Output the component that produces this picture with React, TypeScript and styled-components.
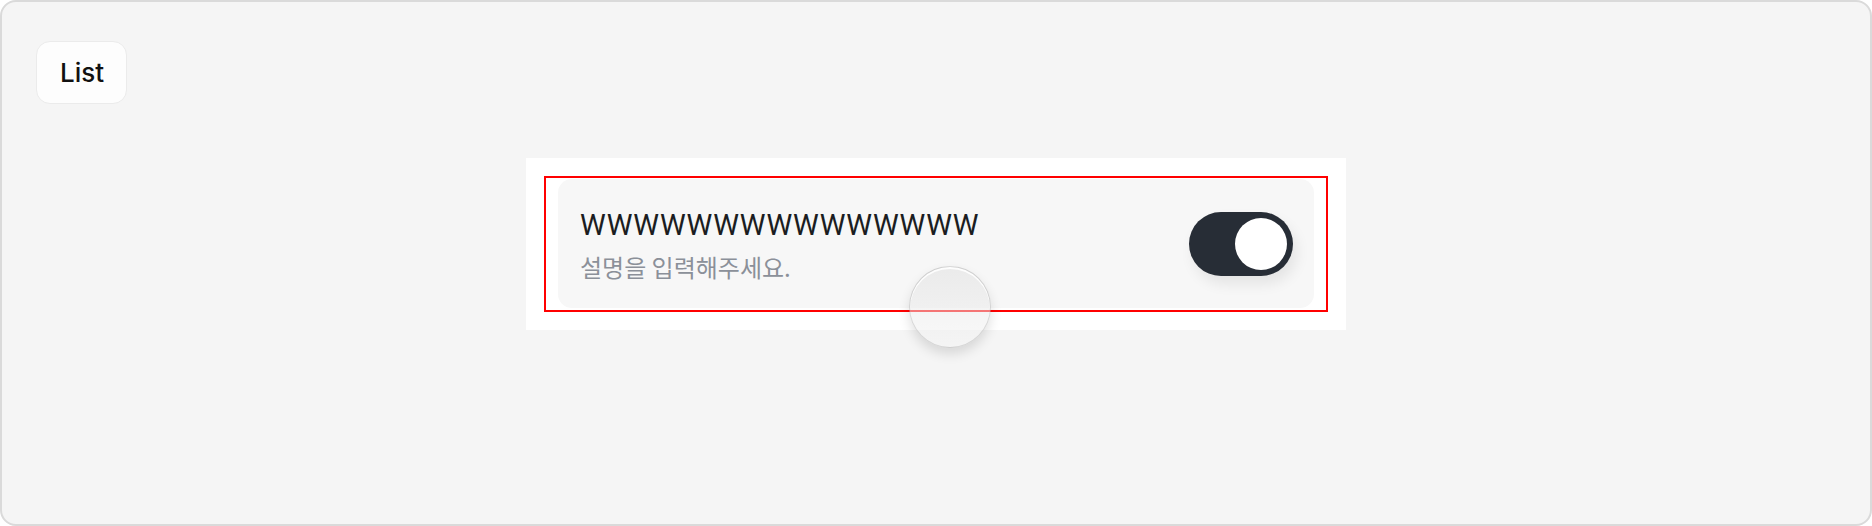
import React, { FC } from 'react';
import styled, { createGlobalStyle } from 'styled-components';

const GlobalStyle = createGlobalStyle`
	html, body {
		margin: 0;
		padding: 0;
		background: #ffffff;
	}
	body {
		font-family: Inter, 'Noto Sans CJK KR', sans-serif;
	}
	* {
		box-sizing: border-box;
	}
`;

type ToggleProps = {
	checked: boolean;
};

const Toggle: FC<ToggleProps> = ({ checked }) => (
	<Track $checked={checked} role="switch" aria-checked={checked}>
		<Knob />
	</Track>
);

type ListItemProps = {
	title: string;
	description: string;
	checked: boolean;
};

const ListItem: FC<ListItemProps> = ({ title, description, checked }) => (
	<Card>
		<TextBlock>
			<Title>{title}</Title>
			<Description>{description}</Description>
		</TextBlock>
		<Toggle checked={checked} />
	</Card>
);

const App: FC = () => (
	<>
		<GlobalStyle />
		<Frame>
			<Header>
				<TabButton>List</TabButton>
			</Header>
			<Stage>
				<Panel>
					<Highlight>
						<ListItem title="WWWWWWWWWWWWWWW" description="설명을 입력해주세요." checked />
					</Highlight>
					<TouchPoint />
				</Panel>
			</Stage>
		</Frame>
	</>
);

const Frame = styled.div`
	width: 1872px;
	height: 526px;
	background: #f5f5f5;
	border: 2px solid #dadada;
	border-radius: 16px;
	padding: 39px 34px 0;
	display: flex;
	flex-direction: column;
	overflow: hidden;
`;

const Header = styled.div`
	display: flex;
`;

const TabButton = styled.button`
	width: 91px;
	height: 63px;
	background: #fdfdfd;
	border: 1px solid #ebebeb;
	border-radius: 14px;
	font-family: Inter, 'Noto Sans CJK KR', sans-serif;
	font-size: 26px;
	font-weight: 500;
	color: #111111;
	padding: 0 0 0 1px;
	cursor: pointer;
`;

const Stage = styled.div`
	display: flex;
	justify-content: center;
	margin-top: 54px;
`;

const Panel = styled.div`
	position: relative;
	width: 820px;
	height: 172px;
	background: #ffffff;
	padding: 18px;
`;

const Highlight = styled.div`
	border: 2px solid #ff0000;
	padding: 1px 12px 2px;
`;

const Card = styled.div`
	height: 129px;
	background: #f7f7f7;
	border-radius: 14px;
	padding: 0 21px 0 22px;
	display: flex;
	align-items: center;
	justify-content: space-between;
`;

const TextBlock = styled.div`
	display: flex;
	flex-direction: column;
	padding-top: 2px;
`;

const Title = styled.div`
	font-family: Roboto, 'Noto Sans CJK KR', sans-serif;
	font-size: 29px;
	letter-spacing: 0.9px;
	line-height: 36px;
	color: #1b1d21;
	margin-bottom: 8px;
`;

const Description = styled.div`
	font-family: 'Noto Sans CJK KR', sans-serif;
	font-size: 24px;
	line-height: 32px;
	color: #8b9099;
`;

const Track = styled.div<{ $checked: boolean }>`
	width: 104px;
	height: 64px;
	border-radius: 32px;
	padding: 6px;
	background: ${(props) => (props.$checked ? '#272d36' : '#d5d8dc')};
	display: flex;
	justify-content: ${(props) => (props.$checked ? 'flex-end' : 'flex-start')};
	box-shadow: 4px 8px 14px rgba(0, 0, 0, 0.08);
`;

const Knob = styled.div`
	width: 52px;
	height: 52px;
	border-radius: 50%;
	background: #ffffff;
`;

const TouchPoint = styled.div`
	position: absolute;
	left: 383px;
	top: 108px;
	width: 82px;
	height: 82px;
	border-radius: 50%;
	background: linear-gradient(180deg, rgba(222, 222, 222, 0.5) 0%, rgba(244, 244, 244, 0.5) 100%);
	border: 1.5px solid rgba(0, 0, 0, 0.12);
	box-shadow: inset 0 2px 0 rgba(255, 255, 255, 0.9), 0 6px 12px rgba(0, 0, 0, 0.12);
	pointer-events: none;
`;

export default App;
